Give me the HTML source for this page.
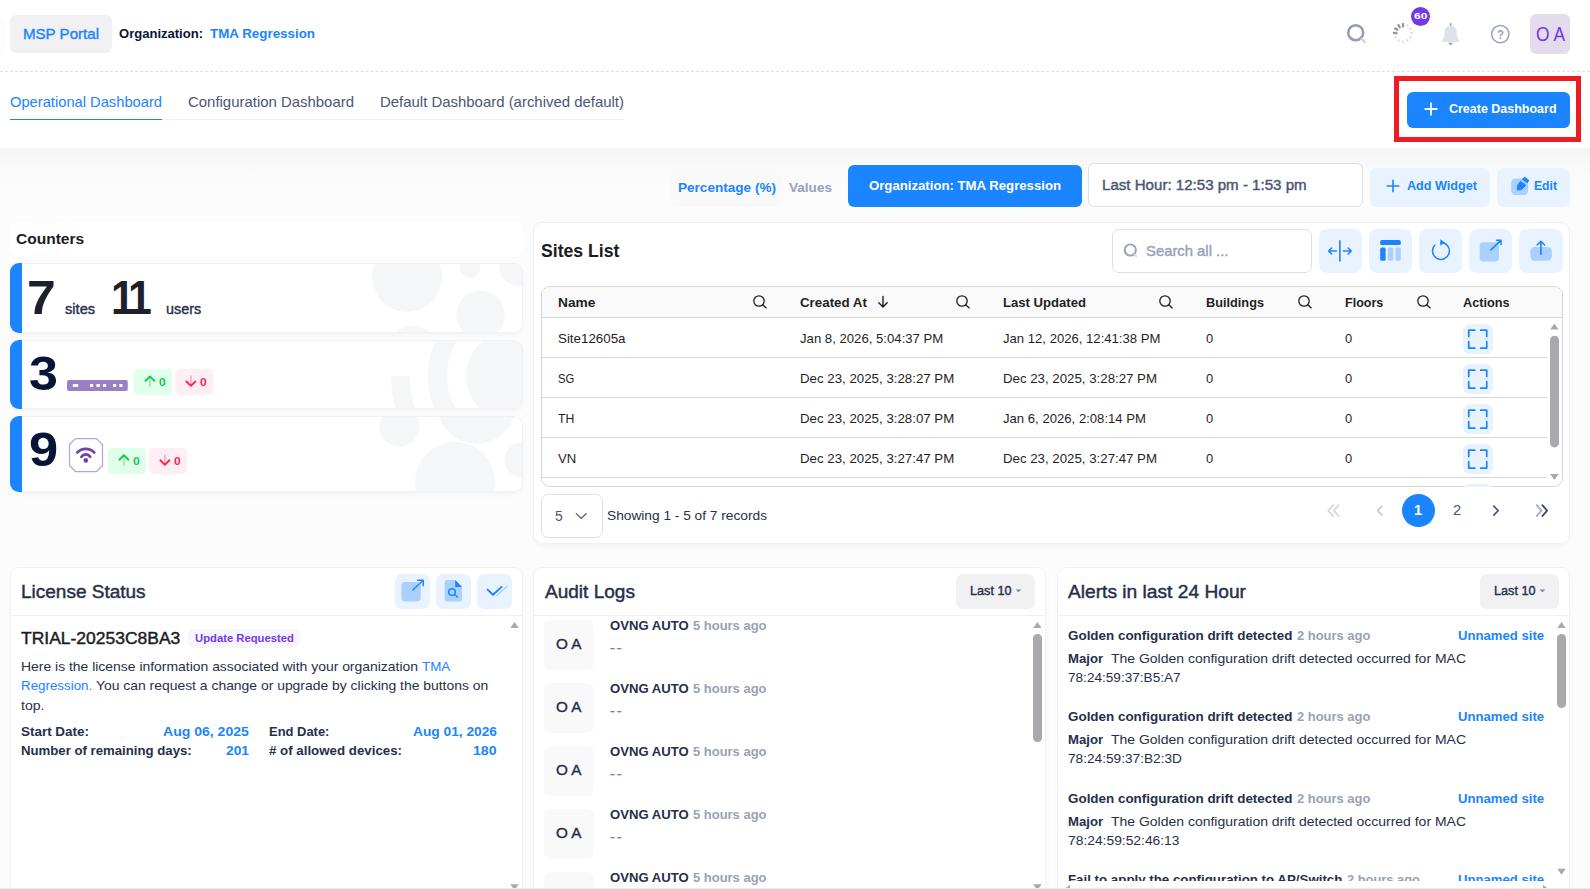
<!DOCTYPE html>
<html lang="en"><head><meta charset="utf-8"><title>Dashboard</title>
<style>
html,body{margin:0;padding:0}
body{width:1590px;height:889px;overflow:hidden;background:#fcfcfc;font-family:"Liberation Sans",sans-serif;position:relative}
.b{position:absolute;display:block}
.t{position:absolute;white-space:nowrap;line-height:1;transform-origin:0 50%;display:block}
</style></head>
<body>
<div class="b" style="left:0px;top:0px;width:1590px;height:148px;background:#fff;"></div>
<div class="b" style="left:0;top:58px;width:1590px;height:13px;background:linear-gradient(to bottom,rgba(0,0,0,0),rgba(0,0,0,0.009))"></div>
<div class="b" style="left:0;top:71px;width:1590px;height:0;border-top:1px dashed #dbdfe9"></div>
<div class="b" style="left:0;top:148px;width:1590px;height:40px;background:linear-gradient(to bottom,rgba(20,30,60,0.032),rgba(20,30,60,0.008) 60%,rgba(0,0,0,0))"></div>
<div class="b" style="left:-9px;top:19px;width:10px;height:38px;border-radius:6px;background:#fff;box-shadow:0 0 5px rgba(0,0,0,0.05)"></div>
<div class="b" style="left:10px;top:15px;width:102px;height:38px;background:#f1f1f4;border-radius:6px;"></div>
<span class="t" style="left:23px;top:26.00px;font-size:15px;font-weight:500;color:#1b84ff;transform:scaleX(1.0054);-webkit-text-stroke:0.4px;">MSP Portal</span>
<span class="t" style="left:119px;top:27.00px;font-size:13px;font-weight:700;color:#071437;transform:scaleX(1.0026);">Organization:</span>
<span class="t" style="left:210px;top:27.00px;font-size:13px;font-weight:700;color:#1b84ff;transform:scaleX(1.0285);">TMA Regression</span>
<svg class="b" style="left:1343px;top:20px;" width="26" height="26" viewBox="0 0 26 26"><circle cx="12.700" cy="12.700" r="7.500" fill="none" stroke="#949bb2" stroke-width="2.500"/><path d="M18.700 19.100L21.900 22" stroke="#d3d7e1" stroke-width="2.400" stroke-linecap="round"/></svg>
<svg class="b" style="left:1389.8px;top:20.2px;" width="26" height="26" viewBox="0 0 26 26"><line x1="13.00" y1="6.50" x2="13.00" y2="3.90" stroke="#8f96ad" stroke-width="2.3" stroke-linecap="round"/><line x1="9.75" y1="7.37" x2="8.45" y2="5.12" stroke="#8f96ad" stroke-width="2.3" stroke-linecap="round"/><line x1="7.37" y1="9.75" x2="5.12" y2="8.45" stroke="#8f96ad" stroke-width="2.3" stroke-linecap="round"/><line x1="6.50" y1="13.00" x2="3.90" y2="13.00" stroke="#8f96ad" stroke-width="2.3" stroke-linecap="round"/><line x1="5.81" y1="17.15" x2="5.21" y2="17.50" stroke="#dfe2ea" stroke-width="2.2" stroke-linecap="round"/><line x1="8.85" y1="20.19" x2="8.50" y2="20.79" stroke="#dfe2ea" stroke-width="2.2" stroke-linecap="round"/><line x1="13.00" y1="21.30" x2="13.00" y2="22.00" stroke="#dfe2ea" stroke-width="2.2" stroke-linecap="round"/><line x1="17.15" y1="20.19" x2="17.50" y2="20.79" stroke="#dfe2ea" stroke-width="2.2" stroke-linecap="round"/><line x1="20.19" y1="17.15" x2="20.79" y2="17.50" stroke="#dfe2ea" stroke-width="2.2" stroke-linecap="round"/><line x1="21.30" y1="13.00" x2="22.00" y2="13.00" stroke="#dfe2ea" stroke-width="2.2" stroke-linecap="round"/><line x1="20.19" y1="8.85" x2="20.79" y2="8.50" stroke="#dfe2ea" stroke-width="2.2" stroke-linecap="round"/><line x1="17.15" y1="5.81" x2="17.50" y2="5.21" stroke="#dfe2ea" stroke-width="2.2" stroke-linecap="round"/></svg>
<div class="b" style="left:1411.100px;top:6.900px;width:19.100px;height:19.100px;border-radius:50%;background:#7239ea"></div>
<span class="t" style="left:1414.4px;top:11.00px;font-size:9.4px;font-weight:700;color:#fff;transform:scaleX(1.2838);">60</span>
<svg class="b" style="left:1438px;top:20px;" width="26" height="28" viewBox="0 0 26 28"><rect x="11.800" y="2.900" width="1.700" height="4" rx="0.800" fill="#9aa1b7"/><path d="M12.600 5.700C9 5.700 6.500 8.400 6.500 11.700V15C6.500 16.800 5.700 18.200 4.300 19.500C3.300 20.400 3.700 21.900 5.100 21.900H20.100C21.500 21.900 21.900 20.400 20.900 19.500C19.500 18.200 18.700 16.800 18.700 15V11.700C18.700 8.400 16.200 5.700 12.600 5.700Z" fill="#dfe2ea"/><path d="M10.500 22.800H14.700A2.100 2.100 0 0 1 10.500 22.800Z" fill="#9aa1b7"/></svg>
<svg class="b" style="left:1487px;top:21px;" width="26" height="26" viewBox="0 0 26 26"><circle cx="13.3" cy="13.1" r="8.6" fill="none" stroke="#99a1b7" stroke-width="1.5"/></svg>
<span class="t" style="left:1496.8px;top:28.00px;font-size:13px;font-weight:700;color:#99a1b7;transform:scaleX(0.8802);">?</span>
<div class="b" style="left:1530px;top:14px;width:40px;height:40px;background:#e4dcec;border-radius:6px;"></div>
<span class="t" style="left:1535.5px;top:24.00px;font-size:20px;font-weight:400;color:#7239ea;transform:scaleX(0.8693);">O A</span>
<div class="b" style="left:10px;top:118.5px;width:614px;height:1px;background:#f1f1f4"></div>
<div class="b" style="left:10px;top:118.5px;width:152px;height:1.1px;background:#1b84ff"></div>
<span class="t" style="left:10px;top:94.00px;font-size:15px;font-weight:400;color:#1b84ff;transform:scaleX(0.9800);">Operational Dashboard</span>
<span class="t" style="left:188px;top:94.00px;font-size:15px;font-weight:400;color:#4b5675;transform:scaleX(0.9953);">Configuration Dashboard</span>
<span class="t" style="left:380px;top:94.00px;font-size:15px;font-weight:400;color:#4b5675;transform:scaleX(0.9953);">Default Dashboard (archived default)</span>
<div class="b" style="left:1394px;top:76px;width:187px;height:66px;background:transparent;border:5px solid #ec1c24;box-sizing:border-box;"></div>
<div class="b" style="left:1407px;top:92px;width:163px;height:36px;background:#1b84ff;border-radius:6px;"></div>
<svg class="b" style="left:1423px;top:101px;" width="16" height="16" viewBox="0 0 16 16"><path d="M8 2.200V13.800M2.200 8H13.800" stroke="#fff" stroke-width="1.8" stroke-linecap="round"/></svg>
<span class="t" style="left:1448.5px;top:102.00px;font-size:13px;font-weight:700;color:#fff;transform:scaleX(0.9600);">Create Dashboard</span>
<div class="b" style="left:671px;top:171px;width:111px;height:36px;background:#f9f9f9;border-radius:6px;"></div>
<span class="t" style="left:678px;top:181.00px;font-size:13px;font-weight:700;color:#1b84ff;transform:scaleX(1.0434);">Percentage (%)</span>
<span class="t" style="left:789px;top:181.00px;font-size:13px;font-weight:700;color:#99a1b7;transform:scaleX(1.0436);">Values</span>
<div class="b" style="left:848px;top:165px;width:234px;height:42px;background:#1b84ff;border-radius:6px;"></div>
<span class="t" style="left:869px;top:179.00px;font-size:13px;font-weight:700;color:#fff;transform:scaleX(1.0133);">Organization: TMA Regression</span>
<div class="b" style="left:1088px;top:163px;width:275px;height:44px;background:#fff;border-radius:6px;border:1px solid #dbdfe9;box-sizing:border-box;"></div>
<span class="t" style="left:1102.4px;top:178.00px;font-size:14px;font-weight:500;color:#4b5675;transform:scaleX(1.0776);-webkit-text-stroke:0.4px;">Last Hour: 12:53 pm - 1:53 pm</span>
<div class="b" style="left:1370px;top:168px;width:120px;height:39px;background:#e9f3ff;border-radius:6px;"></div>
<svg class="b" style="left:1386px;top:179px;" width="14" height="14" viewBox="0 0 14 14"><path d="M7 1.200V12.800M1.200 7H12.800" stroke="#1b84ff" stroke-width="1.600" stroke-linecap="round"/></svg>
<span class="t" style="left:1407px;top:179.00px;font-size:13px;font-weight:700;color:#1b84ff;transform:scaleX(0.9710);">Add Widget</span>
<div class="b" style="left:1497px;top:168px;width:73px;height:39px;background:#e9f3ff;border-radius:6px;"></div>
<svg class="b" style="left:1510px;top:176px;" width="20" height="20" viewBox="0 0 20 20"><rect x="1.200" y="2.500" width="16.900" height="16.500" rx="4.200" fill="#a9d0ff"/><path d="M10.500 5.200L16 9.200L11.300 13.700L7.300 14.100L7.300 9.700Z" fill="#1b84ff" stroke="#1b84ff" stroke-width="0.800" stroke-linejoin="round"/><path d="M14.600 1.400L18.600 4.400L17.300 6.400L12.700 3.300Z" fill="#1b84ff" stroke="#1b84ff" stroke-width="1.200" stroke-linejoin="round"/></svg>
<span class="t" style="left:1534px;top:179.00px;font-size:13px;font-weight:700;color:#1b84ff;transform:scaleX(0.9364);">Edit</span>
<div class="b" style="left:10px;top:222px;width:513px;height:35px;background:#fff;border-radius:8px;box-shadow:0 1px 2px rgba(0,0,0,0.012);"></div>
<span class="t" style="left:16.2px;top:231.00px;font-size:15.5px;font-weight:700;color:#1b1c22;transform:scaleX(1.0023);">Counters</span>
<div class="b" style="left:10px;top:263px;width:513px;height:70px;border-radius:9px;background:#fff;overflow:hidden;box-shadow:0 3px 4px rgba(0,0,0,0.03);"><svg class="b" style="left:0;top:0" width="513" height="70" viewBox="10 263 513 70"><g fill="#f5f6f8"><circle cx="407" cy="277" r="35"/><circle cx="470" cy="267.4" r="10.500"/><circle cx="519" cy="266" r="20"/><circle cx="480.600" cy="315" r="24.300"/><circle cx="413" cy="353.500" r="27.500"/></g></svg><div class="b" style="left:0;top:0;width:100%;height:100%;border-radius:9px;box-shadow:inset 0 0 0 1px #f1f1f4"></div><div class="b" style="left:0;top:0;width:12px;height:70px;background:#1b84ff"></div></div>
<div class="b" style="left:10px;top:340px;width:513px;height:69px;border-radius:9px;background:#fff;overflow:hidden;box-shadow:0 3px 4px rgba(0,0,0,0.03);"><svg class="b" style="left:0;top:0" width="513" height="69" viewBox="10 340 513 69"><g fill="#f5f6f8"><circle cx="511" cy="376" r="45"/></g><circle cx="511" cy="376" r="73.500" fill="none" stroke="#f5f6f8" stroke-width="19"/><path d="M391 376 A120 120 0 0 0 631 376 L612.500 376 A101.500 101.500 0 0 1 409.500 376 Z" fill="#f5f6f8"/></svg><div class="b" style="left:0;top:0;width:100%;height:100%;border-radius:9px;box-shadow:inset 0 0 0 1px #f1f1f4"></div><div class="b" style="left:0;top:0;width:12px;height:69px;background:#1b84ff"></div></div>
<div class="b" style="left:10px;top:416px;width:513px;height:76px;border-radius:9px;background:#fff;overflow:hidden;box-shadow:0 3px 4px rgba(0,0,0,0.03);"><svg class="b" style="left:0;top:0" width="513" height="76" viewBox="10 416 513 76"><g fill="#f5f6f8"><circle cx="399.300" cy="426.500" r="20"/><circle cx="476.500" cy="405" r="39"/><circle cx="522" cy="460" r="17.500"/><circle cx="455" cy="482" r="40"/></g></svg><div class="b" style="left:0;top:0;width:100%;height:100%;border-radius:9px;box-shadow:inset 0 0 0 1px #f1f1f4"></div><div class="b" style="left:0;top:0;width:12px;height:76px;background:#1b84ff"></div></div>
<span class="t" style="left:27.4px;top:273.00px;font-size:49px;font-weight:700;color:#1e2129;transform:scaleX(1.0563);">7</span>
<span class="t" style="left:65.2px;top:301.00px;font-size:15.5px;font-weight:500;color:#252f4a;transform:scaleX(0.9443);-webkit-text-stroke:0.4px;">sites</span>
<span class="t" style="left:111.3px;top:273.00px;font-size:49px;font-weight:700;color:#1e2129;transform:scaleX(0.8729);letter-spacing:-5px;">11</span>
<span class="t" style="left:165.8px;top:301.00px;font-size:15.5px;font-weight:500;color:#252f4a;transform:scaleX(0.9260);-webkit-text-stroke:0.4px;">users</span>
<span class="t" style="left:29px;top:349.00px;font-size:48.5px;font-weight:700;color:#071437;transform:scaleX(1.0747);">3</span>
<svg class="b" style="left:67px;top:380px;" width="61" height="11.2" viewBox="0 0 61 11.2"><rect x="0" y="0" width="60.800" height="11" rx="2" fill="#9b7fc4"/><rect x="5.8" y="4" width="5.4" height="3" fill="#fff"/><rect x="23" y="4" width="3.1" height="3" fill="#fff"/><rect x="29.5" y="4" width="3.3" height="3" fill="#fff"/><rect x="36" y="4" width="3.2" height="3" fill="#fff"/><rect x="46" y="4" width="3.2" height="3" fill="#fff"/><rect x="52.4" y="4" width="3.1" height="3" fill="#fff"/></svg>
<div class="b" style="left:134px;top:369.1px;width:38px;height:25.69999999999999px;background:#dfffea;border-radius:5px;"></div>
<svg class="b" style="left:0;top:0" width="600" height="520"><path d="M149.9 386.15000000000003V377.65000000000003" fill="none" stroke="#9be7b5" stroke-width="1.700" stroke-linecap="round"/><path d="M145.4 380.85L149.9 376.45000000000005L154.4 380.85" fill="none" stroke="#17c653" stroke-width="1.900" stroke-linecap="round" stroke-linejoin="round"/></svg>
<span class="t" style="left:158.8px;top:377.00px;font-size:11.2px;font-weight:700;color:#17c653;transform:scaleX(1.0747);">0</span>
<div class="b" style="left:175px;top:369.1px;width:37.80000000000001px;height:25.69999999999999px;background:#ffeef3;border-radius:5px;"></div>
<svg class="b" style="left:0;top:0" width="600" height="520"><path d="M190.9 376.15000000000003V384.65000000000003" fill="none" stroke="#fba9bd" stroke-width="1.700" stroke-linecap="round"/><path d="M186.4 381.45000000000005L190.9 385.85L195.4 381.45000000000005" fill="none" stroke="#f8285a" stroke-width="1.900" stroke-linecap="round" stroke-linejoin="round"/></svg>
<span class="t" style="left:199.8px;top:377.00px;font-size:11.2px;font-weight:700;color:#f8285a;transform:scaleX(1.0747);">0</span>
<span class="t" style="left:29px;top:425.00px;font-size:48.5px;font-weight:700;color:#071437;transform:scaleX(1.0821);">9</span>
<svg class="b" style="left:68px;top:437px;" width="36" height="36" viewBox="0 0 36 36"><path d="M7.500 1.500H28.500L34.500 7.500V28.500L28.500 34.500H7.500L1.500 28.500V7.500Z" fill="#fff" stroke="#b7a3d6" stroke-width="1.250"/><path d="M9.400 15.400a11.600 11.600 0 0 1 16.800 0" fill="none" stroke="#6f42a5" stroke-width="2.800" stroke-linecap="round"/><path d="M13.400 19.800a5.300 5.300 0 0 1 8.800 0" fill="none" stroke="#6f42a5" stroke-width="2.700" stroke-linecap="round"/><circle cx="17.800" cy="23.400" r="2.300" fill="#6f42a5"/></svg>
<div class="b" style="left:108px;top:447.8px;width:38px;height:26.0px;background:#dfffea;border-radius:5px;"></div>
<svg class="b" style="left:0;top:0" width="600" height="520"><path d="M123.9 465.0V456.5" fill="none" stroke="#9be7b5" stroke-width="1.700" stroke-linecap="round"/><path d="M119.4 459.7L123.9 455.3L128.4 459.7" fill="none" stroke="#17c653" stroke-width="1.900" stroke-linecap="round" stroke-linejoin="round"/></svg>
<span class="t" style="left:132.8px;top:456.00px;font-size:11.2px;font-weight:700;color:#17c653;transform:scaleX(1.0747);">0</span>
<div class="b" style="left:149px;top:447.8px;width:37.900000000000006px;height:26.0px;background:#ffeef3;border-radius:5px;"></div>
<svg class="b" style="left:0;top:0" width="600" height="520"><path d="M164.9 455.0V463.5" fill="none" stroke="#fba9bd" stroke-width="1.700" stroke-linecap="round"/><path d="M160.4 460.3L164.9 464.7L169.4 460.3" fill="none" stroke="#f8285a" stroke-width="1.900" stroke-linecap="round" stroke-linejoin="round"/></svg>
<span class="t" style="left:173.8px;top:456.00px;font-size:11.2px;font-weight:700;color:#f8285a;transform:scaleX(1.0747);">0</span>
<div class="b" style="left:533px;top:222px;width:1037px;height:322px;background:#fff;border-radius:9px;border:1px solid #f1f1f4;box-sizing:border-box;box-shadow:0 3px 4px rgba(0,0,0,0.03);"></div>
<span class="t" style="left:540.6px;top:242.00px;font-size:18.5px;font-weight:700;color:#1b1c22;transform:scaleX(0.9532);">Sites List</span>
<div class="b" style="left:1112px;top:229px;width:200px;height:44px;background:#fff;border-radius:7px;border:1px solid #dbdfe9;box-sizing:border-box;"></div>
<svg class="b" style="left:1121px;top:241px;" width="20" height="20" viewBox="0 0 20 20"><circle cx="9.300" cy="9" r="5.600" fill="none" stroke="#99a1b7" stroke-width="1.900"/><path d="M13.600 13.600L15.200 15.200" stroke="#d6dae4" stroke-width="1.900" stroke-linecap="round"/></svg>
<span class="t" style="left:1145.6px;top:244.00px;font-size:14.3px;font-weight:500;color:#99a1b7;transform:scaleX(1.0369);-webkit-text-stroke:0.4px;">Search all ...</span>
<div class="b" style="left:1319px;top:229px;width:43px;height:44px;background:#e9f3ff;border-radius:8px;"></div>
<div class="b" style="left:1369px;top:229px;width:43px;height:44px;background:#e9f3ff;border-radius:8px;"></div>
<div class="b" style="left:1419px;top:229px;width:43px;height:44px;background:#e9f3ff;border-radius:8px;"></div>
<div class="b" style="left:1469px;top:229px;width:43px;height:44px;background:#e9f3ff;border-radius:8px;"></div>
<div class="b" style="left:1519px;top:229px;width:44px;height:44px;background:#e9f3ff;border-radius:8px;"></div>
<svg class="b" style="left:1319px;top:229px;" width="43" height="44" viewBox="0 0 43 44"><g fill="none" stroke="#1b84ff" stroke-width="1.600" stroke-linecap="round" stroke-linejoin="round"><path d="M20.900 11.800V32"/><path d="M9.600 22H17.300M12.600 19L9.600 22L12.600 25"/><path d="M32.200 22H24.500M29.200 19L32.200 22L29.200 25"/></g></svg>
<svg class="b" style="left:1369px;top:229px;" width="43" height="44" viewBox="0 0 43 44"><rect x="11.200" y="11" width="20.600" height="5" rx="1.600" fill="#1b84ff"/><rect x="11.200" y="18.600" width="5.400" height="13.200" rx="1.600" fill="#1b84ff"/><rect x="18.900" y="18.600" width="5.400" height="13.200" rx="1.600" fill="#a9d0ff"/><rect x="26.400" y="18.600" width="5.400" height="13.200" rx="1.600" fill="#a9d0ff"/></svg>
<svg class="b" style="left:1419px;top:229px;" width="43" height="44" viewBox="0 0 43 44"><path d="M22.400 13.600A8.400 8.400 0 1 1 15.800 16.300" fill="none" stroke="#1b84ff" stroke-width="1.500" stroke-linecap="round"/><path d="M21.300 10.200L25.700 13.500L21.300 16.700Z" fill="#1b84ff"/></svg>
<svg class="b" style="left:1469px;top:229px;" width="43" height="44" viewBox="0 0 43 44"><rect x="10.700" y="13.200" width="19.200" height="19.200" rx="3.500" fill="#a9d0ff"/><g fill="none" stroke="#1b84ff" stroke-width="1.500" stroke-linecap="round" stroke-linejoin="round"><path d="M21.900 20.900L31.800 11.400M27.600 11.200H32V15.600"/></g></svg>
<svg class="b" style="left:1519px;top:229px;" width="44" height="44" viewBox="0 0 44 44"><rect x="11.300" y="18" width="21.600" height="13.800" rx="4.500" fill="#a9d0ff"/><g fill="none" stroke="#1b84ff" stroke-width="1.600" stroke-linecap="round" stroke-linejoin="round"><path d="M21.900 25.200V12.600M18.200 16L21.900 12.300L25.600 16"/></g></svg>
<div class="b" style="left:541px;top:286px;width:1022px;height:201px;border:1px solid #d6d6d6;border-radius:9px;box-sizing:border-box;background:#fff;overflow:hidden"><div class="b" style="left:0;top:0;width:1022px;height:30px;background:#fafafa;border-bottom:1px solid #d6d6d6"></div><div class="b" style="left:0;top:70px;width:1005px;height:1px;background:#d6d6d6"></div><div class="b" style="left:0;top:110px;width:1005px;height:1px;background:#d6d6d6"></div><div class="b" style="left:0;top:150px;width:1005px;height:1px;background:#d6d6d6"></div><div class="b" style="left:0;top:190px;width:1005px;height:1px;background:#d6d6d6"></div></div>
<span class="t" style="left:557.7px;top:296.00px;font-size:13.3px;font-weight:700;color:#1f1f1f;transform:scaleX(1.0326);">Name</span>
<svg class="b" style="left:749.1px;top:291.4px" width="20" height="20"><circle cx="10" cy="10" r="5.200" fill="none" stroke="#1f1f1f" stroke-width="1.300"/><path d="M13.800 13.800L17.200 16.900" stroke="#1f1f1f" stroke-width="1.300" stroke-linecap="round"/></svg>
<span class="t" style="left:799.7px;top:296.00px;font-size:13.3px;font-weight:700;color:#1f1f1f;transform:scaleX(1.0022);">Created At</span>
<svg class="b" style="left:875px;top:294px" width="16" height="16"><path d="M8 2.500V13M3.800 8.800L8 13L12.200 8.800" fill="none" stroke="#1f1f1f" stroke-width="1.400" stroke-linecap="round" stroke-linejoin="round"/></svg>
<svg class="b" style="left:952.1px;top:291.4px" width="20" height="20"><circle cx="10" cy="10" r="5.200" fill="none" stroke="#1f1f1f" stroke-width="1.300"/><path d="M13.800 13.800L17.200 16.900" stroke="#1f1f1f" stroke-width="1.300" stroke-linecap="round"/></svg>
<span class="t" style="left:1003px;top:296.00px;font-size:13.3px;font-weight:700;color:#1f1f1f;transform:scaleX(0.9853);">Last Updated</span>
<svg class="b" style="left:1155.1px;top:291.4px" width="20" height="20"><circle cx="10" cy="10" r="5.200" fill="none" stroke="#1f1f1f" stroke-width="1.300"/><path d="M13.800 13.800L17.200 16.900" stroke="#1f1f1f" stroke-width="1.300" stroke-linecap="round"/></svg>
<span class="t" style="left:1206px;top:296.00px;font-size:13.3px;font-weight:700;color:#1f1f1f;transform:scaleX(0.9574);">Buildings</span>
<svg class="b" style="left:1294.2px;top:291.4px" width="20" height="20"><circle cx="10" cy="10" r="5.200" fill="none" stroke="#1f1f1f" stroke-width="1.300"/><path d="M13.800 13.800L17.200 16.900" stroke="#1f1f1f" stroke-width="1.300" stroke-linecap="round"/></svg>
<span class="t" style="left:1345px;top:296.00px;font-size:13.3px;font-weight:700;color:#1f1f1f;transform:scaleX(0.9424);">Floors</span>
<svg class="b" style="left:1412.5px;top:291.4px" width="20" height="20"><circle cx="10" cy="10" r="5.200" fill="none" stroke="#1f1f1f" stroke-width="1.300"/><path d="M13.800 13.800L17.200 16.900" stroke="#1f1f1f" stroke-width="1.300" stroke-linecap="round"/></svg>
<span class="t" style="left:1463px;top:296.00px;font-size:13.3px;font-weight:700;color:#1f1f1f;transform:scaleX(0.9576);">Actions</span>
<span class="t" style="left:557.7px;top:332.00px;font-size:13.2px;font-weight:400;color:#1f1f1f;transform:scaleX(1.0115);">Site12605a</span>
<span class="t" style="left:799.7px;top:332.00px;font-size:13.2px;font-weight:400;color:#1f1f1f;transform:scaleX(0.9972);">Jan 8, 2026, 5:04:37 PM</span>
<span class="t" style="left:1003px;top:332.00px;font-size:13.2px;font-weight:400;color:#1f1f1f;transform:scaleX(0.9938);">Jan 12, 2026, 12:41:38 PM</span>
<span class="t" style="left:1206px;top:332.00px;font-size:13.2px;font-weight:400;color:#1f1f1f;transform:scaleX(0.9804);">0</span>
<span class="t" style="left:1345px;top:332.00px;font-size:13.2px;font-weight:400;color:#1f1f1f;transform:scaleX(0.9804);">0</span>
<div class="b" style="left:1463px;top:324px;width:30px;height:30px;background:#e9f3ff;border-radius:6.5px;"></div>
<svg class="b" style="left:1463px;top:324px" width="30" height="30"><g fill="none" stroke="#1b84ff" stroke-width="1.700" stroke-linecap="round" stroke-linejoin="round"><path d="M5.750 12.600V6.150H11.800M17.700 6.150H23.750V12.600M23.750 17.600V24.050H17.700M11.800 24.050H5.750V17.600"/></g></svg>
<span class="t" style="left:557.7px;top:372.00px;font-size:13.2px;font-weight:400;color:#1f1f1f;transform:scaleX(0.8551);">SG</span>
<span class="t" style="left:799.7px;top:372.00px;font-size:13.2px;font-weight:400;color:#1f1f1f;transform:scaleX(1.0070);">Dec 23, 2025, 3:28:27 PM</span>
<span class="t" style="left:1003px;top:372.00px;font-size:13.2px;font-weight:400;color:#1f1f1f;transform:scaleX(1.0050);">Dec 23, 2025, 3:28:27 PM</span>
<span class="t" style="left:1206px;top:372.00px;font-size:13.2px;font-weight:400;color:#1f1f1f;transform:scaleX(0.9804);">0</span>
<span class="t" style="left:1345px;top:372.00px;font-size:13.2px;font-weight:400;color:#1f1f1f;transform:scaleX(0.9804);">0</span>
<div class="b" style="left:1463px;top:364px;width:30px;height:30px;background:#e9f3ff;border-radius:6.5px;"></div>
<svg class="b" style="left:1463px;top:364px" width="30" height="30"><g fill="none" stroke="#1b84ff" stroke-width="1.700" stroke-linecap="round" stroke-linejoin="round"><path d="M5.750 12.600V6.150H11.800M17.700 6.150H23.750V12.600M23.750 17.600V24.050H17.700M11.800 24.050H5.750V17.600"/></g></svg>
<span class="t" style="left:557.7px;top:412.00px;font-size:13.2px;font-weight:400;color:#1f1f1f;transform:scaleX(0.9265);">TH</span>
<span class="t" style="left:799.7px;top:412.00px;font-size:13.2px;font-weight:400;color:#1f1f1f;transform:scaleX(1.0070);">Dec 23, 2025, 3:28:07 PM</span>
<span class="t" style="left:1003px;top:412.00px;font-size:13.2px;font-weight:400;color:#1f1f1f;transform:scaleX(0.9951);">Jan 6, 2026, 2:08:14 PM</span>
<span class="t" style="left:1206px;top:412.00px;font-size:13.2px;font-weight:400;color:#1f1f1f;transform:scaleX(0.9804);">0</span>
<span class="t" style="left:1345px;top:412.00px;font-size:13.2px;font-weight:400;color:#1f1f1f;transform:scaleX(0.9804);">0</span>
<div class="b" style="left:1463px;top:404px;width:30px;height:30px;background:#e9f3ff;border-radius:6.5px;"></div>
<svg class="b" style="left:1463px;top:404px" width="30" height="30"><g fill="none" stroke="#1b84ff" stroke-width="1.700" stroke-linecap="round" stroke-linejoin="round"><path d="M5.750 12.600V6.150H11.800M17.700 6.150H23.750V12.600M23.750 17.600V24.050H17.700M11.800 24.050H5.750V17.600"/></g></svg>
<span class="t" style="left:557.7px;top:452.00px;font-size:13.2px;font-weight:400;color:#1f1f1f;transform:scaleX(0.9985);">VN</span>
<span class="t" style="left:799.7px;top:452.00px;font-size:13.2px;font-weight:400;color:#1f1f1f;transform:scaleX(1.0070);">Dec 23, 2025, 3:27:47 PM</span>
<span class="t" style="left:1003px;top:452.00px;font-size:13.2px;font-weight:400;color:#1f1f1f;transform:scaleX(1.0050);">Dec 23, 2025, 3:27:47 PM</span>
<span class="t" style="left:1206px;top:452.00px;font-size:13.2px;font-weight:400;color:#1f1f1f;transform:scaleX(0.9804);">0</span>
<span class="t" style="left:1345px;top:452.00px;font-size:13.2px;font-weight:400;color:#1f1f1f;transform:scaleX(0.9804);">0</span>
<div class="b" style="left:1463px;top:444px;width:30px;height:30px;background:#e9f3ff;border-radius:6.5px;"></div>
<svg class="b" style="left:1463px;top:444px" width="30" height="30"><g fill="none" stroke="#1b84ff" stroke-width="1.700" stroke-linecap="round" stroke-linejoin="round"><path d="M5.750 12.600V6.150H11.800M17.700 6.150H23.750V12.600M23.750 17.600V24.050H17.700M11.800 24.050H5.750V17.600"/></g></svg>
<div class="b" style="left:1463px;top:484px;width:30px;height:2.500px;overflow:hidden"><div class="b" style="left:0;top:0;width:30px;height:30px;border-radius:7px;background:#e9f3ff"></div></div>
<svg class="b" style="left:1547px;top:318px" width="15" height="168"><path d="M7.400 5.600L11.600 11.600H3.200Z" fill="#a9a9ad"/><rect x="3" y="17.700" width="9" height="111.700" rx="4.500" fill="#a9a9ad"/><path d="M7.400 162L11.600 156H3.200Z" fill="#a9a9ad"/></svg>
<div class="b" style="left:541px;top:494px;width:62px;height:43.5px;background:#fff;border-radius:7px;border:1px solid #dbdfe9;box-sizing:border-box;"></div>
<span class="t" style="left:555px;top:509.00px;font-size:14.5px;font-weight:400;color:#4b5675;transform:scaleX(0.9532);">5</span>
<svg class="b" style="left:573px;top:508px" width="16" height="16"><path d="M3.200 5.600L8.200 10.400L13.200 5.600" fill="none" stroke="#4b5675" stroke-width="1.300" stroke-linecap="round" stroke-linejoin="round"/></svg>
<span class="t" style="left:607px;top:509.00px;font-size:13.3px;font-weight:400;color:#252f4a;transform:scaleX(1.0308);">Showing 1 - 5 of 7 records</span>
<svg class="b" style="left:0;top:0" width="1590" height="560"><path d="M1338.7 505.1L1333.9 510.6L1338.7 516.1" fill="none" stroke="#d3d7e2" stroke-width="1.700" stroke-linecap="round" stroke-linejoin="round"/><path d="M1333.1000000000001 505.1L1328.3000000000002 510.6L1333.1000000000001 516.1" fill="none" stroke="#d3d7e2" stroke-width="1.700" stroke-linecap="round" stroke-linejoin="round"/></svg>
<svg class="b" style="left:0;top:0" width="1590" height="560"><path d="M1381.9 506.1L1377.5 510.6L1381.9 515.1" fill="none" stroke="#c4cada" stroke-width="1.600" stroke-linecap="round" stroke-linejoin="round"/></svg>
<div class="b" style="left:1402px;top:493.5px;width:33px;height:33px;border-radius:50%;background:#1b84ff"></div>
<span class="t" style="left:1414.3px;top:503.00px;font-size:14px;font-weight:700;color:#fff;transform:scaleX(1.0261);">1</span>
<span class="t" style="left:1452.8px;top:503.00px;font-size:14.5px;font-weight:400;color:#4b5675;transform:scaleX(1.0151);">2</span>
<svg class="b" style="left:0;top:0" width="1590" height="560"><path d="M1493.8 506.1L1498.2 510.6L1493.8 515.1" fill="none" stroke="#4b5675" stroke-width="1.600" stroke-linecap="round" stroke-linejoin="round"/></svg>
<svg class="b" style="left:0;top:0" width="1590" height="560"><path d="M1536.7 505.1L1541.5 510.6L1536.7 516.1" fill="none" stroke="#a5abc0" stroke-width="1.700" stroke-linecap="round" stroke-linejoin="round"/><path d="M1542.3 505.1L1547.1 510.6L1542.3 516.1" fill="none" stroke="#3b4664" stroke-width="1.700" stroke-linecap="round" stroke-linejoin="round"/></svg>
<div class="b" style="left:10px;top:567px;width:513px;height:333px;background:#fff;border-radius:9px;border:1px solid #f1f1f4;box-sizing:border-box;box-shadow:0 3px 4px rgba(0,0,0,0.03);"></div>
<div class="b" style="left:11px;top:615px;width:511px;height:1px;background:#f1f1f4"></div>
<span class="t" style="left:21.2px;top:583.00px;font-size:18px;font-weight:500;color:#252f4a;transform:scaleX(1.0552);-webkit-text-stroke:0.42px;">License Status</span>
<div class="b" style="left:395px;top:574px;width:35px;height:35px;background:#e9f3ff;border-radius:7px;"></div>
<div class="b" style="left:436px;top:574px;width:35px;height:35px;background:#e9f3ff;border-radius:7px;"></div>
<div class="b" style="left:477px;top:574px;width:35px;height:35px;background:#e9f3ff;border-radius:7px;"></div>
<svg class="b" style="left:395px;top:574px;" width="35" height="35" viewBox="0 0 35 35"><rect x="6.400" y="8" width="19.400" height="19.400" rx="3.600" fill="#a9d0ff"/><g fill="none" stroke="#1b84ff" stroke-width="1.500" stroke-linecap="round" stroke-linejoin="round"><path d="M17.800 16L28 6.500M22.700 6.200H28.200V11.800"/></g></svg>
<svg class="b" style="left:436px;top:574px;" width="35" height="35" viewBox="0 0 35 35"><path d="M10.700 6H19.200L26.100 13V25.400a2 2 0 0 1-2 2H10.700a2 2 0 0 1-2-2V8a2 2 0 0 1 2-2Z" fill="#a9d0ff"/><path d="M19.200 6L26.100 13H19.200Z" fill="#1b84ff"/><circle cx="16" cy="18" r="3.300" fill="none" stroke="#1b84ff" stroke-width="1.500"/><path d="M18.500 20.500L21.400 23" stroke="#1b84ff" stroke-width="1.500" stroke-linecap="round"/></svg>
<svg class="b" style="left:477px;top:574px;" width="35" height="35" viewBox="0 0 35 35"><path d="M20 21L30 12.500" fill="none" stroke="#a9d0ff" stroke-width="1.500" stroke-linecap="round"/><path d="M10.600 15.600L16 20.800L24.600 12.900" fill="none" stroke="#1b84ff" stroke-width="1.900" stroke-linecap="round" stroke-linejoin="round"/></svg>
<span class="t" style="left:21.2px;top:631.00px;font-size:15.7px;font-weight:500;color:#1b1c22;transform:scaleX(1.1139);-webkit-text-stroke:0.4px;">TRIAL-20253C8BA3</span>
<div class="b" style="left:188px;top:629.3px;width:111.80000000000001px;height:18.5px;background:#f8f5ff;border-radius:5px;"></div>
<span class="t" style="left:194.7px;top:633.00px;font-size:11.2px;font-weight:700;color:#7239ea;transform:scaleX(1.0059);">Update Requested</span>
<span class="t" style="left:21px;top:660.00px;font-size:13.2px;font-weight:400;color:#252f4a;transform:scaleX(1.0557);">Here is the license information associated with your organization</span>
<span class="t" style="left:421.8px;top:660.00px;font-size:13.2px;font-weight:400;color:#1b84ff;transform:scaleX(1.0128);">TMA</span>
<span class="t" style="left:21px;top:679.00px;font-size:13.2px;font-weight:400;color:#1b84ff;transform:scaleX(1.0117);">Regression.</span>
<span class="t" style="left:95.8px;top:679.00px;font-size:13.2px;font-weight:400;color:#252f4a;transform:scaleX(1.0544);">You can request a change or upgrade by clicking the buttons on</span>
<span class="t" style="left:21px;top:699.00px;font-size:13.2px;font-weight:400;color:#252f4a;transform:scaleX(1.0682);">top.</span>
<span class="t" style="left:21px;top:725.00px;font-size:13px;font-weight:700;color:#252f4a;transform:scaleX(1.0342);">Start Date:</span>
<span class="t" style="left:163.2px;top:725.00px;font-size:13.4px;font-weight:700;color:#1b84ff;transform:scaleX(1.0479);">Aug 06, 2025</span>
<span class="t" style="left:269px;top:725.00px;font-size:13px;font-weight:700;color:#252f4a;transform:scaleX(0.9955);">End Date:</span>
<span class="t" style="left:413px;top:725.00px;font-size:13.4px;font-weight:700;color:#1b84ff;transform:scaleX(1.0260);">Aug 01, 2026</span>
<span class="t" style="left:21px;top:744.00px;font-size:13px;font-weight:700;color:#252f4a;transform:scaleX(1.0142);">Number of remaining days:</span>
<span class="t" style="left:226px;top:744.00px;font-size:13.4px;font-weight:700;color:#1b84ff;transform:scaleX(1.0294);">201</span>
<span class="t" style="left:269px;top:744.00px;font-size:13px;font-weight:700;color:#252f4a;transform:scaleX(1.0227);"># of allowed devices:</span>
<span class="t" style="left:473.4px;top:744.00px;font-size:13.4px;font-weight:700;color:#1b84ff;transform:scaleX(1.0562);">180</span>
<svg class="b" style="left:0;top:0" width="1590" height="889"><path d="M514.5 621.9L518.7 627.9H510.3Z" fill="#a9a9ad"/></svg>
<svg class="b" style="left:0;top:0" width="1590" height="889"><path d="M514.5 890.2L518.7 884.2H510.3Z" fill="#a9a9ad"/></svg>
<div class="b" style="left:533px;top:567px;width:513px;height:333px;background:#fff;border-radius:9px;border:1px solid #f1f1f4;box-sizing:border-box;box-shadow:0 3px 4px rgba(0,0,0,0.03);"></div>
<div class="b" style="left:534px;top:615px;width:511px;height:1px;background:#f1f1f4"></div>
<span class="t" style="left:544.8px;top:583.00px;font-size:18px;font-weight:500;color:#252f4a;transform:scaleX(1.0569);-webkit-text-stroke:0.42px;">Audit Logs</span>
<div class="b" style="left:956px;top:574px;width:79px;height:34.60000000000002px;background:#f1f1f4;border-radius:7px;"></div>
<span class="t" style="left:970px;top:584.00px;font-size:13.2px;font-weight:500;color:#252f4a;transform:scaleX(0.9592);-webkit-text-stroke:0.4px;">Last 10</span>
<svg class="b" style="left:1014px;top:586px" width="10" height="10"><path d="M1.700 3.500H7.300L4.500 6.300Z" fill="#78829d"/></svg>
<div class="b" style="left:544px;top:620px;width:50px;height:50px;background:#f9f9f9;border-radius:7px;"></div>
<span class="t" style="left:555.6px;top:636.00px;font-size:15.4px;font-weight:500;color:#252f4a;transform:scaleX(0.9894);-webkit-text-stroke:0.4px;">O A</span>
<span class="t" style="left:610.3px;top:619.00px;font-size:13.3px;font-weight:700;color:#252f4a;transform:scaleX(0.9863);">OVNG AUTO</span>
<span class="t" style="left:693px;top:619.00px;font-size:13.3px;font-weight:700;color:#99a1b7;transform:scaleX(0.9751);">5 hours ago</span>
<span class="t" style="left:610.2px;top:641.00px;font-size:13.5px;font-weight:500;color:#78829d;transform:scaleX(1.0981);-webkit-text-stroke:0.4px;letter-spacing:1.600px;">--</span>
<div class="b" style="left:544px;top:683px;width:50px;height:50px;background:#f9f9f9;border-radius:7px;"></div>
<span class="t" style="left:555.6px;top:699.00px;font-size:15.4px;font-weight:500;color:#252f4a;transform:scaleX(0.9894);-webkit-text-stroke:0.4px;">O A</span>
<span class="t" style="left:610.3px;top:682.00px;font-size:13.3px;font-weight:700;color:#252f4a;transform:scaleX(0.9863);">OVNG AUTO</span>
<span class="t" style="left:693px;top:682.00px;font-size:13.3px;font-weight:700;color:#99a1b7;transform:scaleX(0.9751);">5 hours ago</span>
<span class="t" style="left:610.2px;top:704.00px;font-size:13.5px;font-weight:500;color:#78829d;transform:scaleX(1.0981);-webkit-text-stroke:0.4px;letter-spacing:1.600px;">--</span>
<div class="b" style="left:544px;top:746px;width:50px;height:50px;background:#f9f9f9;border-radius:7px;"></div>
<span class="t" style="left:555.6px;top:762.00px;font-size:15.4px;font-weight:500;color:#252f4a;transform:scaleX(0.9894);-webkit-text-stroke:0.4px;">O A</span>
<span class="t" style="left:610.3px;top:745.00px;font-size:13.3px;font-weight:700;color:#252f4a;transform:scaleX(0.9863);">OVNG AUTO</span>
<span class="t" style="left:693px;top:745.00px;font-size:13.3px;font-weight:700;color:#99a1b7;transform:scaleX(0.9751);">5 hours ago</span>
<span class="t" style="left:610.2px;top:767.00px;font-size:13.5px;font-weight:500;color:#78829d;transform:scaleX(1.0981);-webkit-text-stroke:0.4px;letter-spacing:1.600px;">--</span>
<div class="b" style="left:544px;top:809px;width:50px;height:50px;background:#f9f9f9;border-radius:7px;"></div>
<span class="t" style="left:555.6px;top:825.00px;font-size:15.4px;font-weight:500;color:#252f4a;transform:scaleX(0.9894);-webkit-text-stroke:0.4px;">O A</span>
<span class="t" style="left:610.3px;top:808.00px;font-size:13.3px;font-weight:700;color:#252f4a;transform:scaleX(0.9863);">OVNG AUTO</span>
<span class="t" style="left:693px;top:808.00px;font-size:13.3px;font-weight:700;color:#99a1b7;transform:scaleX(0.9751);">5 hours ago</span>
<span class="t" style="left:610.2px;top:830.00px;font-size:13.5px;font-weight:500;color:#78829d;transform:scaleX(1.0981);-webkit-text-stroke:0.4px;letter-spacing:1.600px;">--</span>
<div class="b" style="left:544px;top:872px;width:50px;height:50px;background:#f9f9f9;border-radius:7px;"></div>
<span class="t" style="left:555.6px;top:888.00px;font-size:15.4px;font-weight:500;color:#252f4a;transform:scaleX(0.9894);-webkit-text-stroke:0.4px;">O A</span>
<span class="t" style="left:610.3px;top:871.00px;font-size:13.3px;font-weight:700;color:#252f4a;transform:scaleX(0.9863);">OVNG AUTO</span>
<span class="t" style="left:693px;top:871.00px;font-size:13.3px;font-weight:700;color:#99a1b7;transform:scaleX(0.9751);">5 hours ago</span>
<span class="t" style="left:610.2px;top:893.00px;font-size:13.5px;font-weight:500;color:#78829d;transform:scaleX(1.0981);-webkit-text-stroke:0.4px;letter-spacing:1.600px;">--</span>
<svg class="b" style="left:0;top:0" width="1590" height="889"><path d="M1037.4 621.9L1041.6000000000001 627.9H1033.2Z" fill="#a9a9ad"/></svg>
<div class="b" style="left:1033px;top:634px;width:8.799999999999955px;height:108px;background:#a9a9ad;border-radius:4.4px;"></div>
<svg class="b" style="left:0;top:0" width="1590" height="889"><path d="M1037.4 890.2L1041.6000000000001 884.2H1033.2Z" fill="#a9a9ad"/></svg>
<div class="b" style="left:1057px;top:567px;width:513px;height:333px;background:#fff;border-radius:9px;border:1px solid #f1f1f4;box-sizing:border-box;box-shadow:0 3px 4px rgba(0,0,0,0.03);"></div>
<div class="b" style="left:1058px;top:615px;width:511px;height:1px;background:#f1f1f4"></div>
<span class="t" style="left:1068px;top:583.00px;font-size:18px;font-weight:500;color:#252f4a;transform:scaleX(1.0654);-webkit-text-stroke:0.42px;">Alerts in last 24 Hour</span>
<div class="b" style="left:1480px;top:574px;width:79px;height:34.60000000000002px;background:#f1f1f4;border-radius:7px;"></div>
<span class="t" style="left:1494px;top:584.00px;font-size:13.2px;font-weight:500;color:#252f4a;transform:scaleX(0.9592);-webkit-text-stroke:0.4px;">Last 10</span>
<svg class="b" style="left:1538px;top:586px" width="10" height="10"><path d="M1.700 3.500H7.300L4.500 6.300Z" fill="#78829d"/></svg>
<div class="b" style="left:1058px;top:616px;width:497px;height:264.700px;overflow:hidden">
<div class="b" style="left:-1058px;top:-616px;width:1590px;height:889px">
<span class="t" style="left:1068px;top:629.00px;font-size:13.2px;font-weight:700;color:#252f4a;transform:scaleX(1.0175);">Golden configuration drift detected</span>
<span class="t" style="left:1296.5px;top:629.00px;font-size:13.2px;font-weight:700;color:#99a1b7;transform:scaleX(0.9806);">2 hours ago</span>
<span class="t" style="left:1457.9px;top:629.00px;font-size:13.2px;font-weight:700;color:#1b84ff;transform:scaleX(0.9956);">Unnamed site</span>
<span class="t" style="left:1068px;top:652.00px;font-size:13.2px;font-weight:700;color:#252f4a;transform:scaleX(0.9951);">Major</span>
<span class="t" style="left:1111px;top:652.00px;font-size:13.2px;font-weight:400;color:#252f4a;transform:scaleX(1.0597);">The Golden configuration drift detected occurred for MAC</span>
<span class="t" style="left:1068px;top:671.00px;font-size:13.2px;font-weight:400;color:#252f4a;transform:scaleX(1.0305);">78:24:59:37:B5:A7</span>
<span class="t" style="left:1068px;top:710.00px;font-size:13.2px;font-weight:700;color:#252f4a;transform:scaleX(1.0175);">Golden configuration drift detected</span>
<span class="t" style="left:1296.5px;top:710.00px;font-size:13.2px;font-weight:700;color:#99a1b7;transform:scaleX(0.9806);">2 hours ago</span>
<span class="t" style="left:1457.9px;top:710.00px;font-size:13.2px;font-weight:700;color:#1b84ff;transform:scaleX(0.9956);">Unnamed site</span>
<span class="t" style="left:1068px;top:733.00px;font-size:13.2px;font-weight:700;color:#252f4a;transform:scaleX(0.9951);">Major</span>
<span class="t" style="left:1111px;top:733.00px;font-size:13.2px;font-weight:400;color:#252f4a;transform:scaleX(1.0597);">The Golden configuration drift detected occurred for MAC</span>
<span class="t" style="left:1068px;top:752.00px;font-size:13.2px;font-weight:400;color:#252f4a;transform:scaleX(1.0365);">78:24:59:37:B2:3D</span>
<span class="t" style="left:1068px;top:792.00px;font-size:13.2px;font-weight:700;color:#252f4a;transform:scaleX(1.0175);">Golden configuration drift detected</span>
<span class="t" style="left:1296.5px;top:792.00px;font-size:13.2px;font-weight:700;color:#99a1b7;transform:scaleX(0.9806);">2 hours ago</span>
<span class="t" style="left:1457.9px;top:792.00px;font-size:13.2px;font-weight:700;color:#1b84ff;transform:scaleX(0.9956);">Unnamed site</span>
<span class="t" style="left:1068px;top:815.00px;font-size:13.2px;font-weight:700;color:#252f4a;transform:scaleX(0.9951);">Major</span>
<span class="t" style="left:1111px;top:815.00px;font-size:13.2px;font-weight:400;color:#252f4a;transform:scaleX(1.0597);">The Golden configuration drift detected occurred for MAC</span>
<span class="t" style="left:1068px;top:834.00px;font-size:13.2px;font-weight:400;color:#252f4a;transform:scaleX(1.0485);">78:24:59:52:46:13</span>
<span class="t" style="left:1068px;top:873.00px;font-size:13.2px;font-weight:700;color:#252f4a;transform:scaleX(1.0086);">Fail to apply the configuration to AP/Switch</span>
<span class="t" style="left:1346.8px;top:873.00px;font-size:13.2px;font-weight:700;color:#99a1b7;transform:scaleX(0.9753);">2 hours ago</span>
<span class="t" style="left:1457.9px;top:873.00px;font-size:13.2px;font-weight:700;color:#1b84ff;transform:scaleX(0.9956);">Unnamed site</span>
</div></div>
<svg class="b" style="left:0;top:0" width="1590" height="889"><path d="M1561.5 621.9L1565.7 627.9H1557.3Z" fill="#a9a9ad"/></svg>
<div class="b" style="left:1557px;top:634px;width:8.599999999999909px;height:74px;background:#a9a9ad;border-radius:4.4px;"></div>
<svg class="b" style="left:0;top:0" width="1590" height="889"><path d="M1561.5 874.7L1565.7 868.7H1557.3Z" fill="#a9a9ad"/></svg>
<svg class="b" style="left:0;top:0" width="1590" height="889"><path d="M1064.500 889L1070 884.800V893Z" fill="#a9a9ad"/><path d="M1548.500 889L1543 884.800V893Z" fill="#a9a9ad"/></svg>
<div class="b" style="left:0;top:888px;width:1590px;height:1px;background:#ebebee"></div>
</body></html>
